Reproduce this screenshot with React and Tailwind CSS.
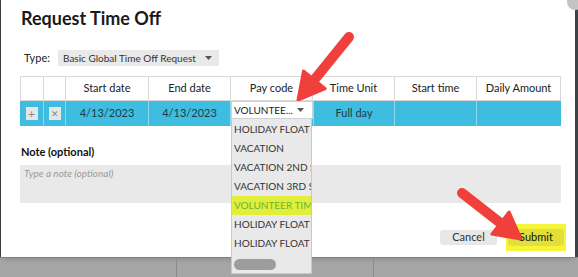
import React from 'react';

const font = { fontFamily: 'Lato, "Open Sans", sans-serif' };

const payCodes = [
  'HOLIDAY FLOAT',
  'VACATION',
  'VACATION 2ND SHIFT',
  'VACATION 3RD SHIFT',
  'VOLUNTEER TIME',
  'HOLIDAY FLOAT 2',
  'HOLIDAY FLOAT 3',
];

const Caret = ({ className = '' }) => (
  <svg width="7" height="4" viewBox="0 0 7 4" className={className}>
    <path d="M0 0 H7 L3.5 4 Z" fill="#555" />
  </svg>
);

const Arrow = ({ x1, y1, x2, y2, len = 26, w = 14 }) => {
  // flecha roja: linea gruesa + punta
  const ang = Math.atan2(y2 - y1, x2 - x1);
  const bx = x2 - Math.cos(ang) * len;
  const by = y2 - Math.sin(ang) * len;
  const px = -Math.sin(ang) * w;
  const py = Math.cos(ang) * w;
  return (
    <g>
      <line x1={x1} y1={y1} x2={bx + Math.cos(ang) * 4} y2={by + Math.sin(ang) * 4} stroke="#f0403c" strokeWidth="10" strokeLinecap="round" />
      <polygon points={`${x2},${y2} ${bx + px},${by + py} ${bx - px},${by - py}`} fill="#f0403c" strokeLinejoin="round" stroke="#f0403c" strokeWidth="3" />
    </g>
  );
};

export default function App() {
  return (
    <div className="relative w-[578px] h-[277px] overflow-hidden bg-[#a6a6a6]" style={font}>
      <div className="flex h-[257px]">
        <div className="w-[1px] bg-[#3c4246]" />
        <div className="w-[574px] bg-white shadow-md flex flex-col px-[19px]">
          <h1 className="text-[18px] font-bold text-[#1a1a1a] mt-[7px] leading-[22px] ml-[1px]">Request Time Off</h1>

          <div className="flex items-center mt-[21px] h-[16px]">
            <span className="text-[11px] text-[#222] ml-[4px] w-[34px]">Type:</span>
            <div className="flex items-center justify-between bg-[#e9e9e9] h-[16px] w-[161px] px-[5px] text-[10px] text-[#333]">
              <span>Basic Global Time Off Request</span>
              <Caret className="mr-[2px]" />
            </div>
          </div>

          <div className="mt-[10px] w-[541px] text-[11px] text-[#222]">
            <div className="flex h-[25px] border-t border-b border-[#d8d8d8]">
              <div className="w-[24px] border-l border-r border-[#d8d8d8]" />
              <div className="w-[22px] border-r border-[#d8d8d8]" />
              {['Start date', 'End date', 'Pay code', 'Time Unit', 'Start time', 'Daily Amount'].map((h, i) => (
                <div key={h} className={`flex items-center justify-center border-r border-[#d8d8d8] ${i === 0 ? 'w-[83px]' : i === 5 ? 'w-[84px]' : 'w-[82px]'}`}>
                  {h}
                </div>
              ))}
            </div>
            <div className="flex h-[25px] bg-[#3fbde0] text-[#1d3b45]">
              <div className="w-[24px] flex items-center justify-center border-r border-[#8fd8ec]">
                <span className="w-[12px] h-[13px] bg-[#e6e6e6] flex items-center justify-center text-[#888] text-[12px] leading-none">+</span>
              </div>
              <div className="w-[22px] flex items-center justify-center border-r border-[#8fd8ec]">
                <span className="w-[12px] h-[13px] bg-[#e6e6e6] flex items-center justify-center text-[#888] text-[9px] leading-none">✕</span>
              </div>
              <div className="w-[83px] flex items-center justify-center border-r border-[#8fd8ec]">4/13/2023</div>
              <div className="w-[82px] flex items-center justify-center border-r border-[#8fd8ec]">4/13/2023</div>
              <div className="w-[82px] relative">
                <div className="absolute left-0 top-0 w-[82px] z-10">
                  <div className="h-[18px] bg-white border border-[#c9d3dc] flex items-center justify-between px-[2px] text-[10px] text-[#222]">
                    <span>VOLUNTEE...</span>
                    <Caret className="mr-[6px]" />
                  </div>
                  <div className="bg-[#e9e9e9] border border-t-0 border-[#b9cbdc] w-[81px] h-[155px] overflow-hidden pt-[1px]">
                    {payCodes.map((p) => (
                      <div
                        key={p}
                        className={`h-[19px] flex items-center px-[2px] text-[10px] whitespace-nowrap overflow-hidden ${p === 'VOLUNTEER TIME' ? 'bg-[#e3ee3a] text-[#5fb83a]' : 'text-[#333]'}`}
                      >
                        {p}
                      </div>
                    ))}
                    <div className="mt-[6px] ml-[2px] w-[42px] h-[11px] rounded-full bg-[#9d9d9d]" />
                  </div>
                </div>
              </div>
              <div className="w-[82px] flex items-center justify-center border-l border-r border-[#8fd8ec]">Full day</div>
              <div className="w-[82px] border-r border-[#8fd8ec]" />
              <div className="w-[84px]" />
            </div>
          </div>

          <div className="mt-[18px] text-[11px] font-bold text-[#111] ml-[1px]">Note (optional)</div>
          <div className="mt-[4px] w-[541px] h-[38px] bg-[#e9e9e9] px-[4px] pt-[1px] text-[10px] italic text-[#9a9a9a]">
            Type a note (optional)
          </div>

          <div className="flex justify-end items-center gap-[9px] mt-[21px] w-[546px]">
            <button className="h-[15px] w-[57px] rounded-[3px] bg-[#e8e8e8] text-[11px] text-[#333] flex items-center justify-center">Cancel</button>
            <div className="bg-[#f5f53a] px-[2px] py-[5px] w-[60px] h-[27px] flex items-center">
              <button className="h-[17px] w-full rounded-[3px] bg-[#e3df3a] text-[11px] text-[#111] flex items-center justify-center">Submit</button>
            </div>
          </div>
        </div>
        <div className="flex-1 bg-[#3c4246]" />
      </div>

      <div className="flex h-[20px] border-t border-[#8f8f8f]">
        <div className="w-[177px] border-r border-[#8a8a8a]" />
        <div className="w-[197px] border-r border-[#8a8a8a]" />
      </div>

      <div className="absolute right-[-5px] top-[-6px] w-[16px] h-[16px] rounded-full bg-[#c4c4c4]" />
      <div className="absolute left-[256px] top-[269px]">
        <Caret />
      </div>

      <svg className="absolute inset-0 pointer-events-none" width="578" height="277">
        <Arrow x1={349} y1={37} x2={298} y2={100} />
        <Arrow x1={462} y1={193} x2={521} y2={239} />
      </svg>
    </div>
  );
}
